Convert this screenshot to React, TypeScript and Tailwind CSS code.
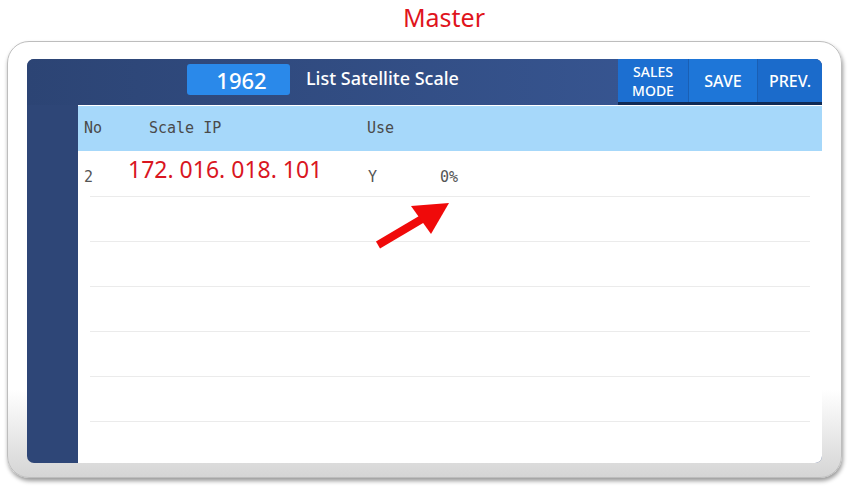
import React from "react";

const mono = { fontFamily: '"DejaVu Sans Mono", monospace' } as React.CSSProperties;

export default function App() {
  const rows = [0, 1, 2, 3, 4, 5];
  return (
    <div className="w-[848px] h-[487px] bg-white overflow-hidden relative" style={{ fontFamily: '"Noto Sans", sans-serif' }}>
      <div className="h-[38px] flex items-start justify-center pl-[40px]">
        <span className="text-[25px] leading-[35px] text-[#e0141c]">Master</span>
      </div>
      <div className="ml-[7px] mt-[3px] w-[835px] h-[437px] rounded-[22px] border border-[#bdbdbd] bg-gradient-to-b from-white from-80% to-[#d5d5d5] shadow-[1px_3px_4px_rgba(0,0,0,0.4)] pt-[17px] pl-[19px] pr-[19px] pb-[14px]">
        <div className="w-full h-full rounded-[7px] bg-[#2e4677] flex flex-col overflow-hidden">
          <div className="h-[46px] flex items-stretch bg-gradient-to-r from-[#2c4474] to-[#3a5a99]">
            <div className="w-[160px]" />
            <div className="mt-[5px] h-[31px] w-[103px] rounded-[3px] bg-[#2a89ea] flex items-center justify-center pl-[6px] text-white text-[22px] font-medium leading-none">1962</div>
            <div className="ml-[16px] h-[38px] flex items-center text-white text-[18px] font-medium">List Satellite Scale</div>
            <div className="flex-1" />
            <div className="flex items-stretch h-[46px] border-b-[3px] border-[#0f2a55]">
              <div className="w-[70px] bg-[#1c6fd1] flex flex-col items-center justify-center text-white text-[14px] font-medium leading-[19px]">
                <span>SALES</span>
                <span>MODE</span>
              </div>
              <div className="w-[69px] bg-[#1e76d8] border-l border-[#1a5fb4] flex items-center justify-center text-white text-[16px] font-medium">SAVE</div>
              <div className="w-[65px] bg-[#1b6bcb] border-l border-[#1a5fb4] flex items-center justify-center text-white text-[16px] font-medium">PREV.</div>
            </div>
          </div>
          <div className="flex-1 flex">
            <div className="w-[51px]" />
            <div className="flex-1 bg-white pt-[1px] relative">
              <div className="h-[45px] bg-[#a6d8fa] flex items-center pl-[6px] text-[15px] text-[#4a4a4a]" style={mono}>
                <span className="w-[65px]">No</span>
                <span className="w-[218px]">Scale IP</span>
                <span>Use</span>
              </div>
              <div className="mx-[12px] h-[46px] border-b border-[#ebebeb] flex items-center text-[15px] text-[#555]">
                <span className="w-[44px] -ml-[6px] pt-[8px]" style={mono}>2</span>
                <span className="w-[240px] text-[23px] text-[#d9161f] -mt-[8px]">172. 016. 018. 101</span>
                <span className="w-[72px] pt-[8px]" style={mono}>Y</span>
                <span className="pt-[8px]" style={mono}>0%</span>
              </div>
              {rows.slice(1).map((r) => (
                <div key={r} className="mx-[12px] h-[45px] border-b border-[#ebebeb]" />
              ))}
              <svg className="absolute left-[295px] top-[89px]" width="80" height="56" viewBox="0 0 80 56">
                <line x1="5" y1="51" x2="54" y2="22" stroke="#f00a0a" strokeWidth="8" />
                <polygon points="76,9 38,12 58,40" fill="#f00a0a" />
              </svg>
            </div>
          </div>
        </div>
      </div>
    </div>
  );
}
